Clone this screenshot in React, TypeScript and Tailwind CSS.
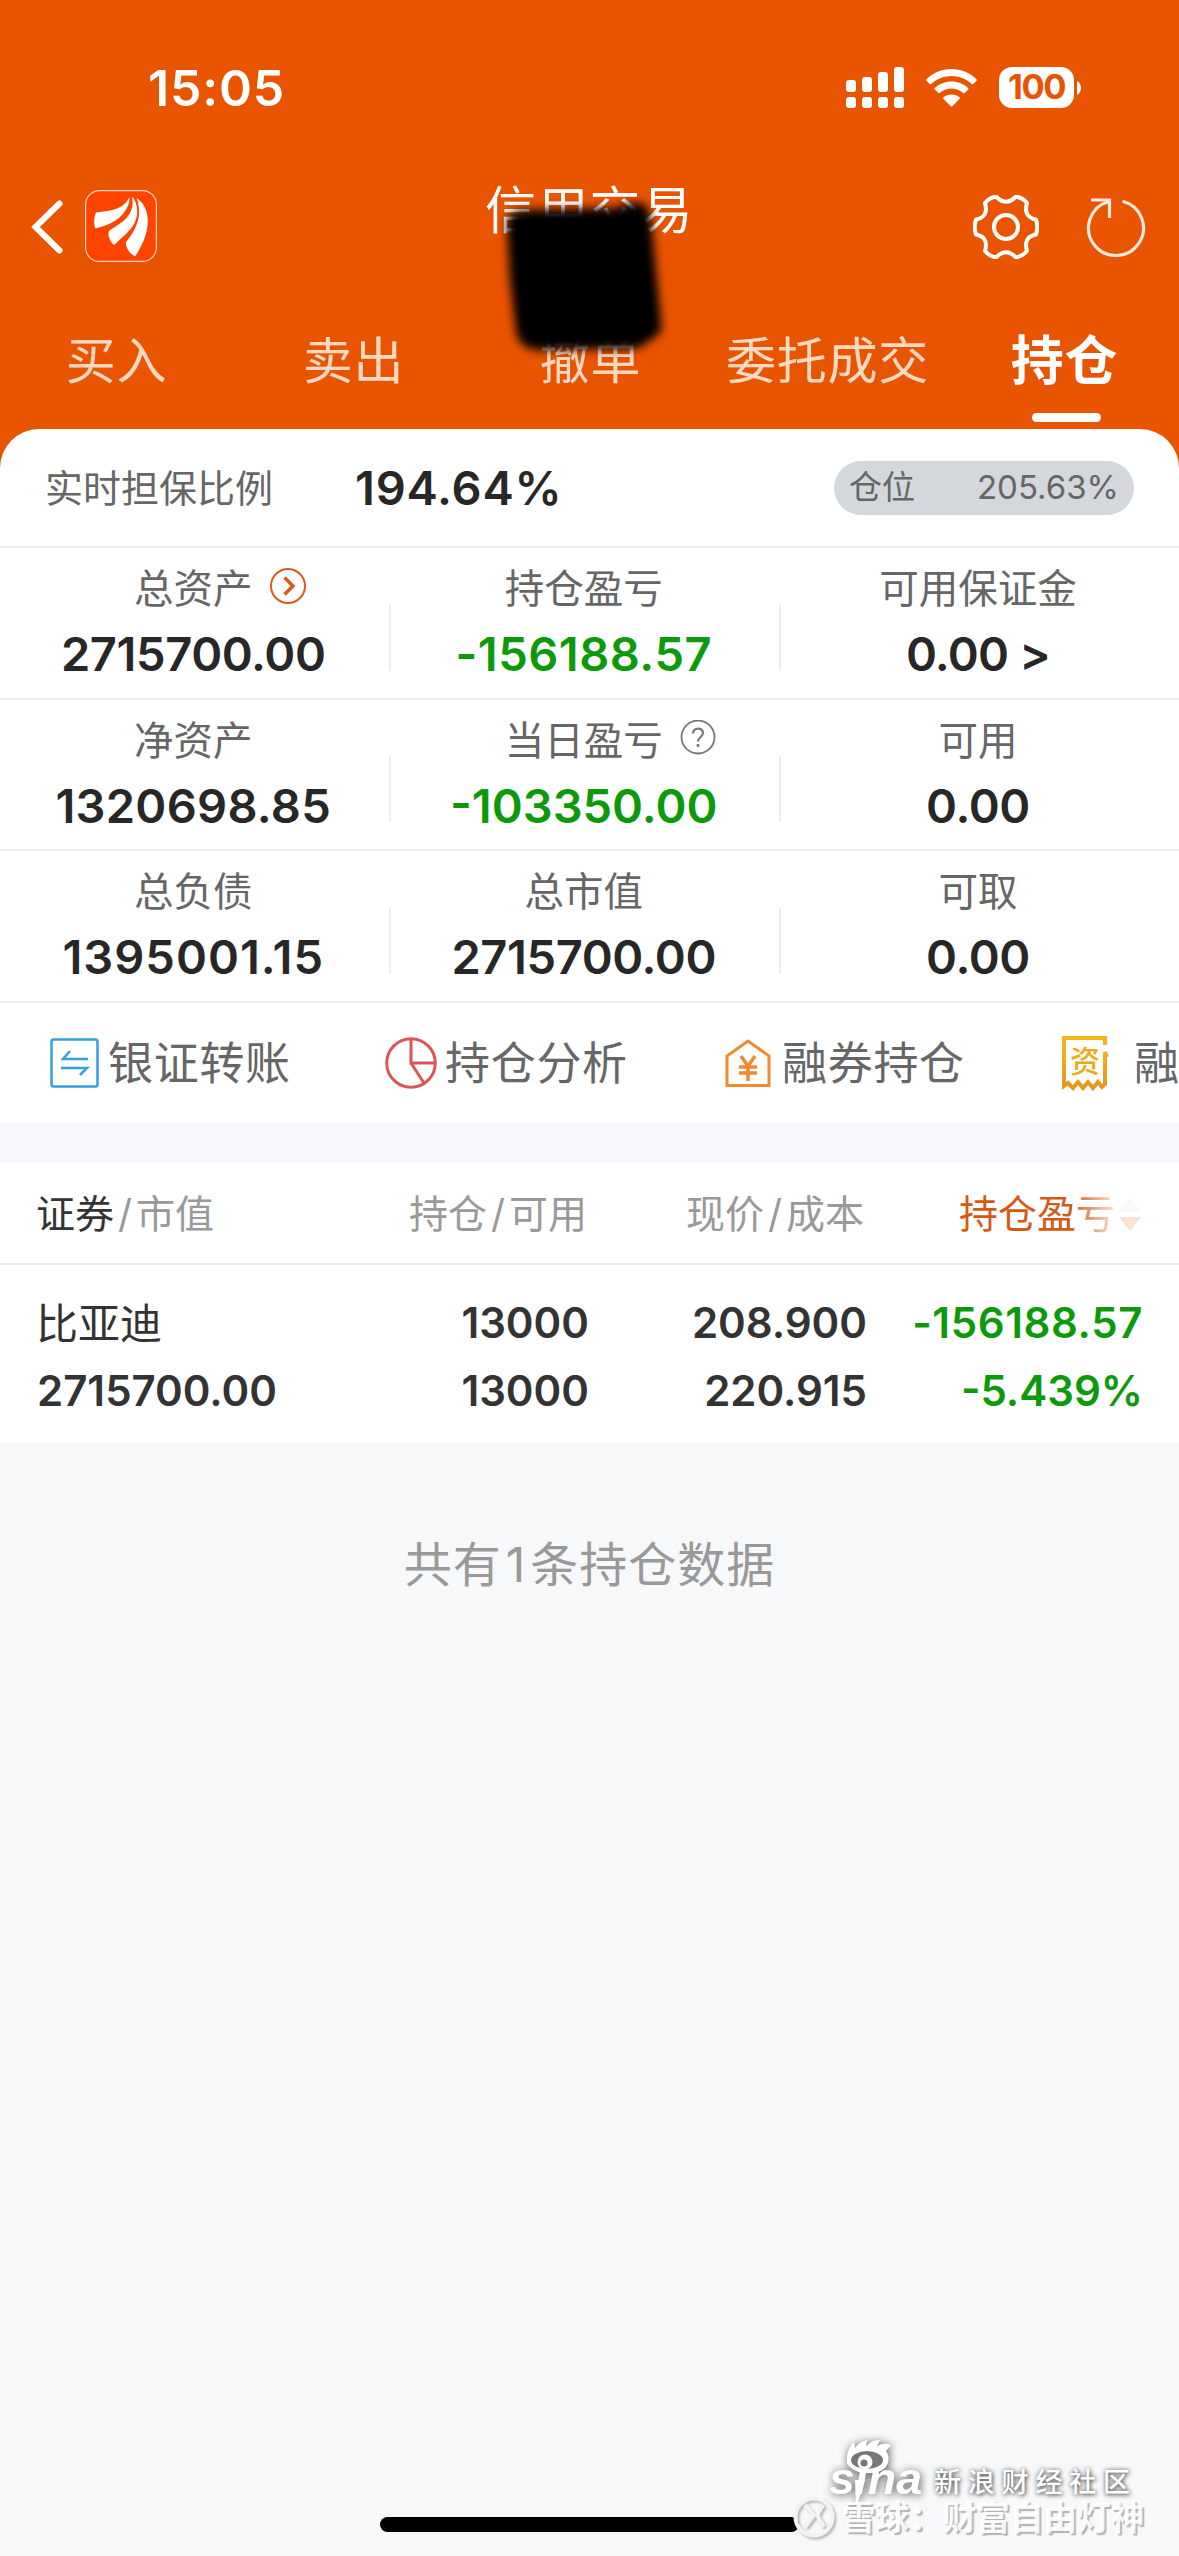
import clsx from "clsx";

interface Stat {
  label: string;
  value: string;
  green?: boolean;
  icon?: "arrow" | "help";
  tracking?: string;
}

const tabs = ["买入", "卖出", "撤单", "委托成交", "持仓"];

const stats: Stat[][] = [
  [
    { label: "总资产", value: "2715700.00", icon: "arrow" },
    {
      label: "持仓盈亏",
      value: "-156188.57",
      green: true,
      tracking: "tracking-[0.5px]",
    },
    {
      label: "可用保证金",
      value: "0.00 >",
      tracking: "tracking-[-0.8px]",
    },
  ],
  [
    { label: "净资产", value: "1320698.85", tracking: "tracking-[0.3px]" },
    {
      label: "当日盈亏",
      value: "-103350.00",
      green: true,
      icon: "help",
      tracking: "tracking-[0px]",
    },
    { label: "可用", value: "0.00" },
  ],
  [
    { label: "总负债", value: "1395001.15", tracking: "tracking-[1px]" },
    { label: "总市值", value: "2715700.00" },
    { label: "可取", value: "0.00" },
  ],
];

function StatusBar() {
  return (
    <div className="flex h-[175px] items-center pl-[148px] text-white">
      <span className="w-[698px] text-[50px] leading-none font-semibold tracking-[0.8px]">
        15:05
      </span>
      <svg width="58" height="42" viewBox="0 0 58 42" fill="currentColor">
        <rect x="0" y="13" width="10" height="12" rx="3" />
        <rect x="16" y="10" width="10" height="15" rx="3" />
        <rect x="32" y="5" width="10" height="20" rx="3" />
        <rect x="48" y="0" width="10" height="25" rx="3" />
        <rect x="0" y="30" width="10" height="11" rx="3" />
        <rect x="16" y="30" width="10" height="11" rx="3" />
        <rect x="32" y="30" width="10" height="11" rx="3" />
        <rect x="48" y="30" width="10" height="11" rx="3" />
      </svg>
      <svg
        className="ml-[22px]"
        width="51"
        height="38"
        viewBox="0 0 51 38"
        fill="currentColor"
      >
        <path d="M25.500 0C35.400 0 44.300 3.900 50.500 10.200Q51.200 11 50.500 11.700L47.300 15Q46.600 15.700 45.800 15C40.500 10 33.400 7 25.500 7S10.500 10 5.200 15Q4.400 15.700 3.700 15L.5 11.700Q-.2 11 .5 10.200C6.700 3.900 15.600 0 25.500 0Z" />
        <path d="M25.500 12.500C32 12.500 37.800 15 42.100 19Q42.900 19.700 42.200 20.500L38.700 24Q38 24.700 37.200 24C34 21.200 30 19.600 25.500 19.600S17 21.200 13.800 24Q13 24.700 12.300 24L8.800 20.500Q8.100 19.700 8.900 19C13.200 15 19 12.500 25.500 12.500Z" />
        <path d="M25.500 25.400C28.600 25.400 31.400 26.500 33.600 28.300Q34.400 29 33.700 29.800L26.500 37Q25.500 38 24.500 37L17.300 29.800Q16.600 29 17.400 28.300C19.600 26.500 22.400 25.400 25.500 25.400Z" />
      </svg>
      <div className="ml-[22px] flex h-[41px] w-[75px] items-center justify-center rounded-[13px] bg-white text-[34.500px] leading-none font-bold tracking-[-1.5px] text-[#e95400]">
        100
      </div>
      <svg
        className="ml-[3px]"
        width="4"
        height="14"
        viewBox="0 0 4 14"
        fill="currentColor"
      >
        <path d="M0 0C5.300 2.500 5.300 11.500 0 14Z" />
      </svg>
    </div>
  );
}

function NavBar() {
  return (
    <div className="flex h-[103px] items-center pl-[31px] text-white">
      <svg width="34" height="56" viewBox="0 0 34 56" fill="none">
        <path
          d="M28.500 4.500L4.500 28L28.500 51.500"
          stroke="currentColor"
          strokeWidth="6"
          strokeLinecap="round"
          strokeLinejoin="miter"
        />
      </svg>
      <svg
        className="-mt-px ml-[20px]"
        width="72"
        height="72"
        viewBox="0 0 72 72"
        fill="none"
      >
        <rect
          x=".6"
          y=".6"
          width="70.800"
          height="70.800"
          rx="14"
          fill="#ff4300"
          stroke="#ffd3bd"
          strokeWidth="1.200"
        />
        <g fill="#fff">
          <path d="M44.500 7C45 13 42 20 36 26C29 33 20 36 10.300 38.500C8.500 33 9 27 11 22.500C25 20.500 38 20.500 44.500 7Z" />
          <path d="M47 6C53 14 54 24 49.500 33C45 42 36 48 29 55C24.500 51 22.500 45 24 41C35 33 51 27 47 6Z" />
          <path d="M51.500 8C61 14 64.500 26 62 39C60 50 55 59 50 66.500C44 63 40.500 57 41 52C49 42 59 27 51.500 8Z" />
        </g>
      </svg>
      <span className="mt-[10px] ml-[328px] w-[488px] self-start text-[51px] leading-none tracking-[1.2px]">
        信用交易
      </span>
      <svg
        width="66"
        height="64"
        viewBox="-33 -32 66 64"
        fill="none"
        stroke="currentColor"
        strokeWidth="4"
        strokeLinejoin="round"
      >
        <circle r="12" />
        <path d="M-10 -30.500Q0 -20 10 -30.500Q17 -29 21 -24Q17 -10 30 -7.500Q32.500 0 30 7.500Q17 10 21 24Q17 29 10 30.500Q0 20 -10 30.500Q-17 29 -21 24Q-17 10 -30 7.500Q-32.500 0 -30 -7.500Q-17 -10 -21 -24Q-17 -29 -10 -30.500Z" />
      </svg>
      <svg
        className="ml-[47px]"
        width="60"
        height="60"
        viewBox="-30 -30 60 60"
        fill="none"
        stroke="#ffe9dc"
        strokeWidth="3.200"
      >
        <path d="M6.500 -25.700A27.500 27.500 0 1 1 -8 -25.300" />
        <path d="M-25 -27H-6.500V-9" />
      </svg>
    </div>
  );
}

function Tabs() {
  return (
    <div className="-ml-[2px] flex h-[151px]">
      {tabs.map((tab, i) => {
        const active = i === tabs.length - 1;
        return (
          <div
            key={tab}
            className="flex w-[237px] shrink-0 flex-col items-center pt-[58px]"
          >
            <span
              className={clsx(
                "leading-[50px] tracking-[0.8px] whitespace-nowrap",
                active
                  ? "text-[53px] font-bold text-white"
                  : "text-[50px] text-[#ffd9c2]"
              )}
            >
              {tab}
            </span>
            {active && (
              <span className="mt-[27px] ml-[3px] h-[9px] w-[69px] rounded-full bg-white" />
            )}
          </div>
        );
      })}
    </div>
  );
}

function StatCell({ stat, last }: { stat: Stat; last: boolean }) {
  return (
    <div
      className={clsx(
        "relative flex flex-col items-center pt-[21px] pr-[4px]",
        last ? "flex-1" : "w-[390.500px]"
      )}
    >
      <div className="relative text-[39.500px] leading-[40px] text-[#666]">
        {stat.label}
        {stat.icon === "arrow" && (
          <svg
            className="absolute top-[-2px] left-[135px]"
            width="38"
            height="38"
            viewBox="0 0 38 38"
            fill="none"
            stroke="#dd5a1a"
          >
            <circle cx="19" cy="19" r="17" strokeWidth="2" />
            <path d="M15.500 10.500L24 19L15.500 27.500" strokeWidth="3.500" />
          </svg>
        )}
        {stat.icon === "help" && (
          <svg
            className="absolute top-[-1px] left-[174px]"
            width="38"
            height="38"
            viewBox="0 0 38 38"
            fill="none"
            stroke="#777"
          >
            <circle cx="19" cy="17" r="16.500" strokeWidth="1.800" />
            <path
              d="M14 13.500C14 7 24 7 24 13C24 17 19 17 19 21.500"
              strokeWidth="2.200"
            />
            <path d="M19 24V27" strokeWidth="2.500" />
          </svg>
        )}
      </div>
      <div
        className={clsx(
          "mt-[21px] text-[47px] leading-[48px] font-semibold",
          stat.tracking ?? "tracking-[-0.4px]",
          stat.green ? "text-[#0c9a0c]" : "text-[#272727]"
        )}
      >
        {stat.value}
      </div>
      {!last && (
        <span className="absolute right-0 bottom-[27px] h-[66px] w-[2px] bg-[#ececec]" />
      )}
    </div>
  );
}

function Actions() {
  return (
    <div className="flex h-[120px] items-center overflow-hidden bg-white text-[45px] leading-none tracking-[0.7px] whitespace-nowrap text-[#666]">
      <div className="flex w-[337px] shrink-0 items-center pl-[50px]">
        <svg
          width="49"
          height="50"
          viewBox="0 0 49 50"
          fill="none"
          stroke="#379fdc"
          strokeWidth="2.500"
        >
          <rect x="1.500" y="1.500" width="46" height="47" rx="2" />
          <path d="M38 21H13L20 13" />
          <path d="M11 30H37L30 37" />
        </svg>
        <span className="mt-[2px] ml-[9px]">银证转账</span>
      </div>
      <div className="flex w-[337px] shrink-0 items-center pl-[48px]">
        <svg
          width="52"
          height="52"
          viewBox="-26 -26 52 52"
          fill="none"
          stroke="#dc5556"
          strokeWidth="3"
        >
          <circle r="24.300" />
          <path d="M0 -24V0H24M0 0L13 20" />
        </svg>
        <span className="mt-[2px] ml-[8px]">持仓分析</span>
      </div>
      <div className="flex w-[337px] shrink-0 items-center pl-[51px]">
        <svg
          width="46"
          height="50"
          viewBox="0 0 46 50"
          fill="none"
          stroke="#ee8b32"
          strokeWidth="3"
        >
          <path d="M2 47.500V18L23 3L44 18V47.500Z" />
          <path
            d="M16 18L23 28L30 18M14 29H32M14 35H32M23 28V43"
            strokeWidth="3.500"
          />
        </svg>
        <span className="mt-[2px] ml-[11px]">融券持仓</span>
      </div>
      <div className="flex shrink-0 items-center pl-[50px]">
        <span className="relative flex h-[56px] w-[48px] justify-center pt-[11px] text-[30px] leading-none font-medium tracking-normal text-[#ecaa19]">
          <svg
            className="absolute top-0 left-0"
            width="48"
            height="56"
            viewBox="0 0 48 56"
            fill="none"
          >
            <defs>
              <linearGradient id="receipt" x1="0" y1="0" x2="0" y2="1">
                <stop offset="0" stopColor="#f5b71b" />
                <stop offset="1" stopColor="#e8961a" />
              </linearGradient>
            </defs>
            <path
              d="M44 10V3H3V51L7 48L12 53L17 47L22 53L27 47L32 53L37 47L41 52L44 49V17L46 22"
              stroke="url(#receipt)"
              strokeWidth="4"
            />
          </svg>
          资
        </span>
        <span className="mt-[2px] ml-[25px]">融资持仓</span>
      </div>
    </div>
  );
}

function Holdings() {
  return (
    <div className="bg-white">
      <div className="flex h-[102px] items-center border-b-2 border-[#ececec] pt-[2px] pr-[37px] pl-[36px] text-[39px] leading-none text-[#999]">
        <div className="flex w-[250px] gap-[4px]">
          <span className="text-[#333]">证券</span>
          <span>/</span>
          <span>市值</span>
        </div>
        <div className="flex w-[301px] justify-end gap-[4px]">
          <span>持仓</span>
          <span>/</span>
          <span>可用</span>
        </div>
        <div className="flex w-[277px] justify-end gap-[4px]">
          <span>现价</span>
          <span>/</span>
          <span>成本</span>
        </div>
        <div className="relative ml-auto flex items-center">
          <span className="text-[39px] text-[#d45a14]">持仓盈亏</span>
          <svg className="ml-[3px]" width="24" height="34" viewBox="0 0 24 34">
            <path d="M12 0L23 15H1Z" fill="#ddd" />
            <path d="M1 20H23L12 34Z" fill="#e95400" />
          </svg>
          <span className="absolute top-0 right-0 h-full w-[72px] bg-linear-to-r from-white/0 via-white/80 via-60% to-white/85" />
        </div>
      </div>
      <div className="flex h-[178px] pt-[24px] pr-[36px] pl-[37px] text-[42px] leading-[68px] font-semibold text-[#333]">
        <div className="w-[250px]">
          <div className="-ml-px pt-px text-[42px] leading-[67px] font-normal">
            比亚迪
          </div>
          <div>2715700.00</div>
        </div>
        <div className="w-[302px] text-right">
          <div>13000</div>
          <div>13000</div>
        </div>
        <div className="w-[278px] text-right">
          <div>208.900</div>
          <div>220.915</div>
        </div>
        <div className="ml-auto text-right text-[#0c9a0c]">
          <div className="tracking-[0.6px]">-156188.57</div>
          <div>-5.439%</div>
        </div>
      </div>
    </div>
  );
}

function Watermark() {
  return (
    <div className="absolute right-0 bottom-0 h-[136px] w-[389px] text-white">
      <svg
        className="absolute top-0 left-0 drop-shadow-[1px_1px_4px_rgba(60,60,60,0.85)]"
        width="180"
        height="110"
        viewBox="790 2420 180 110"
        fill="#fff"
      >
        <text
          x="829"
          y="2494"
          fontSize="44"
          fontWeight="700"
          fontStyle="italic"
          fontFamily="Liberation Sans"
          textLength="93"
          lengthAdjust="spacingAndGlyphs"
        >
          sina
        </text>
        <path d="M855 2480L865 2480L856 2508Z" />
        <path d="M847 2463C846 2452 850 2446 854 2442L855 2448Q860 2441 867 2440L866 2446Q873 2439 880 2440L877 2446Q884 2442 891 2445L886 2451C891 2458 888 2465 884 2469C874 2476 853 2475 847 2463Z" />
        <ellipse cx="867" cy="2460" rx="16" ry="9" fill="#777" />
        <circle cx="865" cy="2462" r="7.500" />
        <circle cx="864" cy="2463" r="3.500" fill="#777" />
      </svg>
      <span className="absolute top-[49px] left-[144px] text-[27px] leading-none font-medium tracking-[6.800px] whitespace-nowrap [text-shadow:1px_1px_4px_rgba(70,70,70,0.95),0_0_5px_rgba(100,100,100,0.6)]">
        新浪财经社区
      </span>
      <svg
        className="absolute top-[75px] left-[2px] drop-shadow-[2px_2px_1px_rgba(120,120,120,0.5)]"
        width="44"
        height="44"
        viewBox="-22 -22 44 44"
        fill="none"
        stroke="#f3f3f3"
        strokeWidth="4"
      >
        <circle r="18.500" />
        <path d="M-9 -12L0 -2L-9 10M9 -12L3 -2L10 10" />
      </svg>
      <span className="absolute top-[81px] left-[52px] text-[33.600px] leading-none font-bold whitespace-nowrap text-white/90 [text-shadow:2px_2px_1px_rgba(110,110,110,0.5)]">
        雪球：财富自由灯神
      </span>
    </div>
  );
}

export default function App() {
  return (
    <div className="relative flex h-[2556px] w-[1179px] flex-col overflow-hidden bg-[#f7f8fa] font-['Inter','Noto_Sans_CJK_SC',sans-serif]">
      <div className="relative h-[479px] bg-[#e95400]">
        <StatusBar />
        <NavBar />
        <Tabs />
        {/* scribbled-out account name */}
        <svg
          className="absolute top-[185px] left-[485px] blur-[5px]"
          width="200"
          height="190"
          viewBox="485 185 200 190"
        >
          <path d="M507 224Q507 210 527 210L615 208Q630 202 642 203Q650 207 652 228L661 322Q663 333 655 337L642 346Q636 350 620 349L540 350Q520 350 516 332L510 280Z" />
        </svg>
      </div>

      <div className="relative -mt-[50px] rounded-t-[39px] bg-white">
        <div className="flex h-[119px] items-center border-b-2 border-[#ececec] pr-[45px] pl-[45px]">
          <span className="w-[310px] text-[38px] leading-none text-[#666]">
            实时担保比例
          </span>
          <span className="text-[47px] leading-none font-semibold tracking-[0.8px] text-[#272727]">
            194.64%
          </span>
          <div className="ml-auto flex h-[54px] w-[300px] items-center justify-between rounded-full bg-[#d4d7dc] pr-[15px] pl-[15px] text-[33px] leading-none text-[#666]">
            <span>仓位</span>
            <span>205.63%</span>
          </div>
        </div>
        {stats.map((row, i) => (
          <div
            key={i}
            className="flex h-[151.500px] border-b-2 border-[#ececec]"
          >
            {row.map((stat, j) => (
              <StatCell key={stat.label} stat={stat} last={j === 2} />
            ))}
          </div>
        ))}
        <Actions />
      </div>

      <div className="h-[40px] shrink-0 bg-[#f6f8fb]" />
      <Holdings />

      <p className="mt-[98px] text-center text-[48px] leading-none tracking-[1px] text-[#999]">
        共有<span className="mx-[4px]">1</span>条持仓数据
      </p>

      <div className="mt-auto mb-[24px] h-[15px] w-[419px] shrink-0 self-center rounded-full bg-black" />
      <Watermark />
    </div>
  );
}
